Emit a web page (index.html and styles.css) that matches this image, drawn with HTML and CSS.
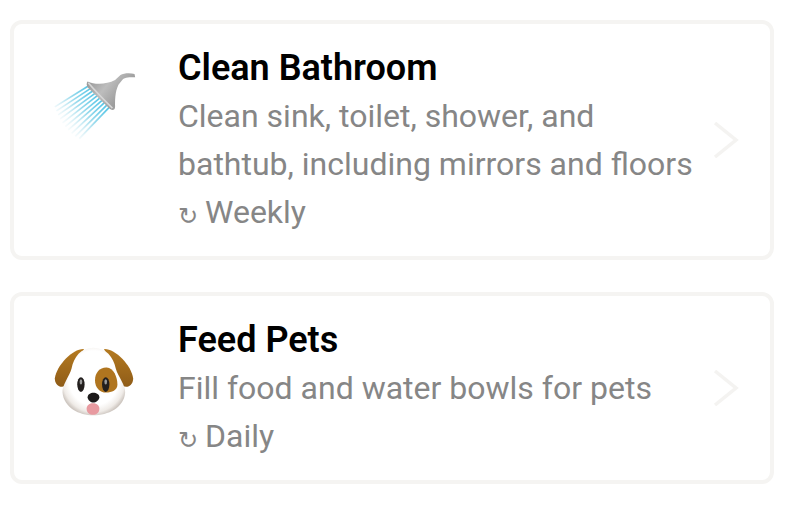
FILE: index.html
```html
<!DOCTYPE html>
<html>
  <head>
    <meta charset="UTF-8" />
    <title>Chores</title>
    <link rel="stylesheet" href="styles.css">
  </head>
  <body>
    <div class="chore-list">
      <div class="chore-card chore-tall">
        <div class="chore-icon">
          <svg width="84" height="72" viewBox="37 28 250 215">
            <defs>
              <linearGradient id="spray" gradientUnits="userSpaceOnUse" x1="175" y1="105" x2="66" y2="200">
                <stop offset="0" stop-color="#4fc4e6"/>
                <stop offset="0.45" stop-color="#9bdbed"/>
                <stop offset="1" stop-color="#e6f3f6" stop-opacity="0.15"/>
              </linearGradient>
              <linearGradient id="metal" x1="0" y1="0" x2="1" y2="0.6">
                <stop offset="0" stop-color="#8a8a8a"/>
                <stop offset="0.45" stop-color="#bdbdbd"/>
                <stop offset="0.8" stop-color="#9c9c9c"/>
                <stop offset="1" stop-color="#b4b4b4"/>
              </linearGradient>
            </defs>
            <g stroke="url(#spray)" stroke-width="5" fill="none">
              <path d="M142 76 L42 138"/>
              <path d="M149 83 L47 150"/>
              <path d="M156 90 L52 162"/>
              <path d="M163 97 L58 174"/>
              <path d="M170 104 L65 186"/>
              <path d="M177 111 L73 197"/>
              <path d="M184 118 L82 207"/>
              <path d="M191 125 L92 217"/>
              <path d="M198 132 L103 226"/>
              <path d="M205 139 L115 233"/>
            </g>
            <path d="M140 62 C160 72 195 72 222 58 L238 43 C248 37 268 37 280 40 L282 50 C265 50 252 50 244 57 L232 72 C221 95 222 120 222 138 C222 150 211 149 205 143 L142 82 C136 76 136 66 140 62Z" fill="url(#metal)"/>
            <path d="M142 66 C160 88 190 118 214 142" stroke="#d6d6d6" stroke-width="5" fill="none"/>
          </svg>
        </div>
        <div class="chore-body">
          <h2>Clean Bathroom</h2>
          <p>Clean sink, toilet, shower, and bathtub, including mirrors and floors</p>
          <p class="repeat"><span class="repeat-mark">↻</span>Weekly</p>
        </div>
        <svg class="chevron" width="28" height="40" viewBox="0 0 28 40">
          <path d="M3 3 L24 20 L3 37" fill="none" stroke="#f4f3f1" stroke-width="3.5"/>
        </svg>
      </div>
      <div class="chore-card">
        <div class="chore-icon chore-icon-low">
          <svg width="84" height="72" viewBox="40 30 250 215">
            <defs>
              <radialGradient id="fur" cx="0.5" cy="0.45" r="0.56">
                <stop offset="0.72" stop-color="#ffffff"/>
                <stop offset="0.9" stop-color="#efebe7"/>
                <stop offset="1" stop-color="#cfc8c2"/>
              </radialGradient>
              <linearGradient id="ear" x1="0" y1="0" x2="0" y2="1">
                <stop offset="0" stop-color="#b47a20"/>
                <stop offset="1" stop-color="#8f5c18"/>
              </linearGradient>
            </defs>
            <path d="M132 42 C100 40 50 90 45 130 C45 150 62 160 76 152 L110 90Z" fill="url(#ear)"/>
            <path d="M192 42 C224 40 274 90 279 130 C279 150 262 160 248 152 L214 90Z" fill="url(#ear)"/>
            <path d="M160 38 C122 38 102 66 95 100 C88 125 66 150 68 172 C72 218 118 240 160 240 C204 240 252 218 255 172 C257 150 234 125 227 100 C220 66 198 38 160 38Z" fill="url(#fur)"/>
            <path d="M165 135 C165 112 180 96 200 97 C220 98 232 125 232 148 C232 165 215 172 198 172 C180 172 165 158 165 135Z" fill="#b0751f"/>
            <ellipse cx="123" cy="148" rx="11" ry="22" fill="#231f1e"/>
            <ellipse cx="197" cy="148" rx="11" ry="22" fill="#231f1e"/>
            <ellipse cx="123" cy="140" rx="4" ry="8" fill="#9a9a9a"/>
            <ellipse cx="197" cy="140" rx="4" ry="8" fill="#9a9a9a"/>
            <path d="M140 220 C140 244 178 244 178 220 C178 212 172 204 159 204 C146 204 140 212 140 220Z" fill="#e89aa0"/>
            <path d="M143 186 C143 168 178 168 178 186 C178 195 167 202 160 202 C153 202 143 195 143 186Z" fill="#1c1a1a"/>
          </svg>
        </div>
        <div class="chore-body">
          <h2>Feed Pets</h2>
          <p>Fill food and water bowls for pets</p>
          <p class="repeat"><span class="repeat-mark">↻</span>Daily</p>
        </div>
        <svg class="chevron" width="28" height="40" viewBox="0 0 28 40">
          <path d="M3 3 L24 20 L3 37" fill="none" stroke="#f4f3f1" stroke-width="3.5"/>
        </svg>
      </div>
    </div>
  </body>
</html>
```

FILE: styles.css
```css
body {
  margin: 0;
  background: #ffffff;
  font-family: Roboto, "Liberation Sans", sans-serif;
}

.chore-list {
  display: flex;
  flex-direction: column;
  gap: 32px;
  padding: 20px 16px 24px 10px;
}

.chore-card {
  display: flex;
  align-items: center;
  height: 192px;
  box-sizing: border-box;
  padding-left: 39px;
  border: 4px solid #f5f4f2;
  border-radius: 12px;
}

.chore-tall {
  height: 240px;
}

/* the icon sits at the top of the card, not centred */
.chore-icon {
  align-self: flex-start;
  width: 125px;
  flex: none;
  display: flex;
  margin-top: 46px;
}

.chore-icon-low {
  margin-top: 49px;
}

.chore-body {
  width: 534px;
  flex: none;
  padding-top: 4px;
}

.chore-body h2 {
  margin: 0;
  font-size: 36px;
  font-weight: 600;
  line-height: 48px;
  color: #000000;
}

.chore-body p {
  margin: 0;
  font-size: 32px;
  line-height: 48px;
  color: #868686;
}

.repeat-mark {
  display: inline-block;
  width: 27px;
  font-family: "DejaVu Sans", sans-serif;
  font-size: 24px;
  vertical-align: -1px;
}

.chevron {
  flex: none;
}
```
